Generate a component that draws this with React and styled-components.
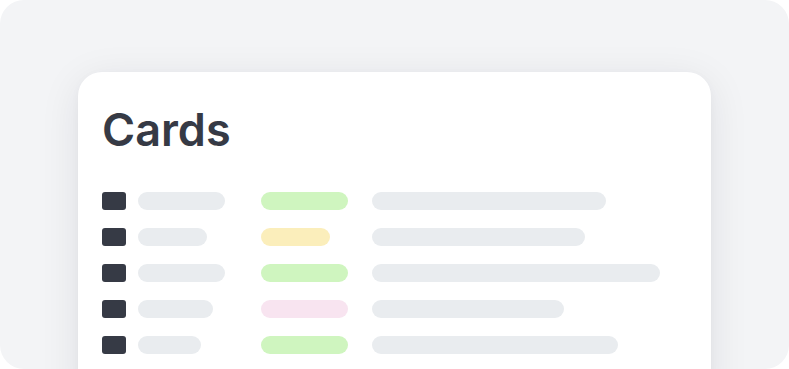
import React from 'react';
import { styled, createGlobalStyle } from "styled-components";

const Global = createGlobalStyle`
  html, body {
    margin:0;
    padding:0;
    background:#ffffff;
  }
`;

const Outer = styled.div`
  width:789px;
  height:369px;
  background:#f3f4f6;
  border-radius:24px;
  overflow:hidden;
  padding:72px 0 0 78px;
  box-sizing:border-box;
`;

const Card = styled.div`
  width:633px;
  height:340px;
  background:#ffffff;
  border-radius:24px;
  box-shadow:0 8px 40px rgba(17, 24, 39, 0.09), 0 2px 8px rgba(17, 24, 39, 0.03);
  padding:30px 24px 0 24px;
  box-sizing:border-box;
  font-family:Inter, "Liberation Sans", sans-serif;
`;

const Title = styled.h1`
  margin:0;
  font-size:45px;
  line-height:56px;
  font-weight:600;
  color:#363a45;
`;

const List = styled.div`
  margin-top:34px;
  display:flex;
  flex-direction:column;
  gap:18px;
`;

const Row = styled.div`
  display:grid;
  grid-template-columns:24px 111px 99px 1fr;
  column-gap:12px;
  align-items:center;
`;

const Square = styled.div`
  width:24px;
  height:18px;
  border-radius:3px;
  background:#363a45;
`;

const Pill = styled.div`
  height:18px;
  border-radius:9px;
  background:${(p) => p.color};
`;

const colors = {
  grey: "#e9ecef",
  green: "#cff5bf",
  yellow: "#fbeebb",
  pink: "#f8e4f0",
};

const rows = [
  { a: 87, tag: "green", tagw: 87, c: 234 },
  { a: 69, tag: "yellow", tagw: 69, c: 213 },
  { a: 87, tag: "green", tagw: 87, c: 288 },
  { a: 75, tag: "pink", tagw: 87, c: 192 },
  { a: 63, tag: "green", tagw: 87, c: 246 },
];

const App = () => {
  return (
    <>
      <Global />
      <Outer>
        <Card>
          <Title>Cards</Title>
          <List>
            {rows.map((r, i) => (
              <Row key={i}>
                <Square />
                <Pill color={colors.grey} style={{ width: r.a }} />
                <Pill color={colors[r.tag]} style={{ width: r.tagw }} />
                <Pill color={colors.grey} style={{ width: r.c }} />
              </Row>
            ))}
          </List>
        </Card>
      </Outer>
    </>
  );
};

export default App;
